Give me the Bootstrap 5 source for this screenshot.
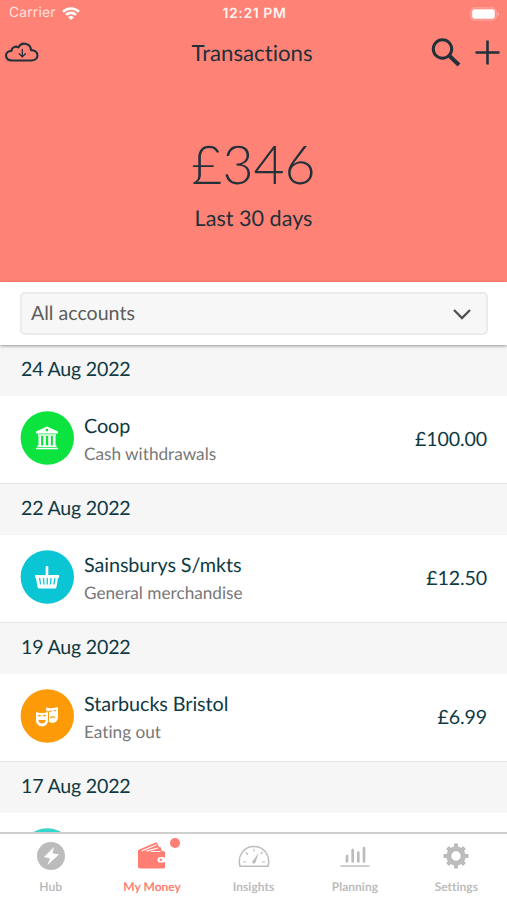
<!DOCTYPE html>
<html lang="en">
<head>
<meta charset="utf-8">
<meta name="viewport" content="width=device-width, initial-scale=1">
<title>Transactions</title>
<link href="https://cdn.jsdelivr.net/npm/bootstrap@5.3.0/dist/css/bootstrap.min.css" rel="stylesheet">
<style>
body{font-family:Lato,"Liberation Sans",sans-serif;color:#0f3a44;background:#fff;line-height:1.2;text-rendering:geometricPrecision;font-variant-ligatures:none}
.app{height:900px;overflow:hidden}
.hero{background:#ff8276;height:282px;color:#22303a}
.status{height:27px;font:400 13.8px/27px Inter,"Liberation Sans",sans-serif;color:#fff;padding:0 7px 0 9px}
.status .side{flex:1 1 0}
.status .carrier{color:#ffe3df;letter-spacing:.2px}
.clock{font-size:14px;font-weight:600;letter-spacing:.6px;color:#fff2f0}
.titlebar{height:50px;padding:2px 7px 0 4px}
.titlebar .side{flex:1 1 0}
.titlebar h1{font-size:22.200px;font-weight:400}
.plus{margin-left:14px}
.total{font-size:53.600px;font-weight:300;line-height:60px;margin-top:57px}
.period{font-size:21.600px;line-height:26px;margin-top:11px}
.filter{height:63px;padding:10px 19px 10px 20px;box-shadow:0 1px 3px rgba(0,0,0,.4);z-index:1}
.picker{height:43px;border:2px solid #ebebeb;border-radius:5px;background:#f7f7f7;color:#5c5c5c;font-size:19.6px;padding:0 15px 0 9px}
.day{height:51px;background:#f6f6f6;font-size:19.600px;letter-spacing:-.2px;padding:0 21px 1px}
.entry{height:88px;padding:0 20px 3px;border-bottom:1px solid #e6e6e6}
.disc{width:54px;height:54px;margin-right:10px}
.name{font-size:19.800px;line-height:24px;letter-spacing:-.08px;margin-top:2px}
.kind{font-size:17.200px;line-height:21px;color:#777;margin-top:5px}
.amount{font-size:19.600px;letter-spacing:-.1px;padding-top:3px}
.tabs{height:68px;border-top:2px solid #cfcfcf;color:#bcbcbc;font-size:12px;font-weight:700;background:#fff;z-index:2}
.tabs a{color:inherit;flex:1 1 0;padding-top:6px}
.tabs a.active{color:#ff7e73}
.tabs svg{width:38px;height:32px}
.dot{width:10px;height:10px;background:#ff7e73;top:4px;left:69px}
.lbl{line-height:16px;margin-top:7px}
</style>
</head>
<body>
<div class="app d-flex flex-column">
  <header class="hero flex-shrink-0">
    <div class="status d-flex align-items-center">
      <div class="side d-flex align-items-center carrier"><span>Carrier</span>
        <svg class="ms-1" width="22" height="16" viewBox="0 0 22 16" fill="none" stroke="#fff" stroke-width="2.6"><path d="M3 5.700a11.600 11.600 0 0 1 16 0M6 8.900a7.300 7.300 0 0 1 10 0"/><path d="M11 14.100 8.100 11.300a4.200 4.200 0 0 1 5.800 0z" fill="#fff" stroke="none"/></svg>
      </div>
      <div class="clock">12:21 PM</div>
      <div class="side d-flex justify-content-end">
        <svg width="30" height="14" viewBox="0 0 30 14"><rect x=".8" y=".8" width="25.400" height="12.400" rx="3.800" fill="none" stroke="#ffa79e" stroke-width="1.200"/><rect x="2.200" y="2.200" width="22.600" height="9.600" rx="2.400" fill="#fff"/><path d="M27.600 5v4q1.600-.6 1.600-2t-1.600-2z" fill="#ffb0a7"/></svg>
      </div>
    </div>
    <div class="titlebar d-flex align-items-center">
      <div class="side"><svg width="36" height="24" viewBox="0 0 36 24" fill="none" stroke="#22303a" stroke-width="2.100" stroke-linecap="round" stroke-linejoin="round"><path d="M8 19.500C4 19.500 2 17.400 2 14.600s2.200-4.700 5.400-4.700C7.700 6.400 11.600 4.600 14.400 6.400 16.200 3.100 19.500 2.100 22.300 2.900c3 .8 4.600 3 4.600 6.200 4 .1 6.600 2.400 6.600 5.200 0 3.100-2.400 5.200-6.200 5.200z"/><path d="M18.300 8.500V16M15.200 12.800l3.100 3.100 3.100-3.100" stroke-width="1.300"/></svg></div>
      <h1 class="mb-0">Transactions</h1>
      <div class="side d-flex justify-content-end align-items-center">
        <svg width="30" height="30" viewBox="0 0 30 30" fill="none" stroke="#22303a"><circle cx="11.500" cy="11" r="9.200" stroke-width="3"/><path d="m18 17.500 10 9.500" stroke-width="4"/></svg>
        <svg class="plus" width="25" height="26" viewBox="0 0 25 26" stroke="#22303a" stroke-width="2.600"><path d="M.5 12.500h24M12.500 .5v24"/></svg>
      </div>
    </div>
    <div class="total text-center">£346</div>
    <div class="period text-center">Last 30 days</div>
  </header>
  <section class="filter bg-white position-relative flex-shrink-0">
    <div class="picker d-flex justify-content-between align-items-center"><span>All accounts</span>
      <svg width="18" height="12" viewBox="0 0 18 12" fill="none" stroke="#505050" stroke-width="2.300"><path d="m1 2 8 8 8-8"/></svg>
    </div>
  </section>
  <main class="flex-grow-1 overflow-hidden">
    <div class="day d-flex align-items-center">24 Aug 2022</div>
    <div class="entry d-flex align-items-center">
      <svg class="disc" viewBox="0 0 54 54"><circle cx="27.300" cy="27" r="26.700" fill="#0de33f"/><g fill="#fff"><path fill-rule="evenodd" d="M27 15.500 38 20.500v2H16v-2zM27 17.700a1.400 1.400 0 1 0 0 2.800 1.400 1.400 0 0 0 0-2.800z"/><path d="M18 23.200h18v1.500H18zM18.500 25h2.600v9.500h-2.600zM23.200 25h2.600v9.500h-2.600zM28.200 25h2.600v9.500h-2.600zM32.900 25h2.600v9.500h-2.600zM17.500 34.500h19V36h-19zM16 36.700h22v1.600H16z"/></g></svg>
      <div class="flex-grow-1"><div class="name">Coop</div><div class="kind">Cash withdrawals</div></div>
      <div class="amount">£100.00</div>
    </div>
    <div class="day d-flex align-items-center">22 Aug 2022</div>
    <div class="entry d-flex align-items-center">
      <svg class="disc" viewBox="0 0 54 54"><circle cx="27.300" cy="27" r="26.700" fill="#0ac5d3"/><path fill="#fff" d="M25.700 16.500q1.300-.9 2.600 0V25H39v3h-1l-1.500 9q-.3 1.500-1.800 1.500H19.300q-1.500 0-1.800-1.500L16 28h-1v-3h10.700z"/><path d="m19.600 28 1 6.500M23.500 28l.5 6.500M27.200 28v6.500M31 28l-.5 6.500M34.900 28l-1 6.500" stroke="#0ac5d3" stroke-width="1.300"/></svg>
      <div class="flex-grow-1"><div class="name">Sainsburys S/mkts</div><div class="kind">General merchandise</div></div>
      <div class="amount">£12.50</div>
    </div>
    <div class="day d-flex align-items-center">19 Aug 2022</div>
    <div class="entry d-flex align-items-center">
      <svg class="disc" viewBox="0 0 54 54"><circle cx="27.300" cy="27" r="26.700" fill="#fc9b07"/><path fill="#fff" d="M26 18.500q6 1.500 12-.5V28q0 5.500-6 6-3-.3-5-3z"/><path d="M29 22.500q1.500-1 2.800 0M33.500 22q1.500-1 2.500 0M30.500 29q2.200-2.200 4.500-.5" fill="none" stroke="#fc9b07" stroke-width="1.200"/><path fill="#fff" stroke="#fc9b07" stroke-width="1" d="M15.500 22.500q6.500 2.300 13 0v8.500q0 6-6.500 7-6.500-1-6.500-7z"/><path d="M18 27q1.300-1.200 2.700 0M23.300 27q1.300-1.200 2.700 0" fill="none" stroke="#fc9b07" stroke-width="1.200"/><path d="M18.300 31h7.400q-.7 3.500-3.700 3.500T18.300 31z" fill="#fc9b07"/></svg>
      <div class="flex-grow-1"><div class="name">Starbucks Bristol</div><div class="kind">Eating out</div></div>
      <div class="amount">£6.99</div>
    </div>
    <div class="day d-flex align-items-center">17 Aug 2022</div>
    <div class="entry d-flex align-items-center">
      <svg class="disc" viewBox="0 0 54 54"><circle cx="27.300" cy="27" r="26.700" fill="#35d6cc"/></svg>
    </div>
  </main>
  <nav class="tabs d-flex flex-shrink-0 text-center">
    <a class="text-decoration-none" href="#"><svg viewBox="0 0 38 32"><circle cx="19" cy="16" r="14" fill="currentColor"/><path d="m22 7-10 10 6 1.500L15.500 25 27 14.500l-6.500-1.300z" fill="#fff"/></svg><div class="lbl">Hub</div></a>
    <a class="active position-relative text-decoration-none" href="#"><svg viewBox="0 0 38 32"><path fill="currentColor" d="M5 10 22.500 2.500q1.500-.5 2 1L26 7l2 .5.800 3.500h1.700q1.500 0 1.500 1.500V27q0 1.500-1.500 1.500H7q-2 0-2-2z"/><path d="m8.500 11 15-6.200M13.500 11.200l11.500-3.200M18 11.500h9.500" stroke="#fff" stroke-width="1.200"/><rect x="24.500" y="17" width="8" height="5.600" rx="2.800" fill="#fff"/><circle cx="27.800" cy="19.800" r="1.200" fill="currentColor"/></svg><span class="dot position-absolute rounded-circle"></span><div class="lbl">My Money</div></a>
    <a class="text-decoration-none" href="#"><svg viewBox="0 0 38 32" fill="none" stroke="currentColor" stroke-width="1.500"><path d="M5 26.200C2 15 9.500 6.500 19 6.500S36 15 33 26.200z" stroke-linejoin="round"/><path d="M19 9v2.500M11 12.500l2 2M27.500 12l-1.700 2M8 22h3M27 22h3" stroke-width="1.200"/><path d="m23.500 13-3 9.500q-1.500 2-3 .5-.5-1.500.5-2.500z" fill="currentColor" stroke="none"/></svg><div class="lbl">Insights</div></a>
    <a class="text-decoration-none" href="#"><svg viewBox="0 0 38 32" fill="none" stroke="currentColor"><path d="M4.500 26h29" stroke-width="1.500"/><path d="M11 21.500v-5.500M16.700 21.500V10M22.300 21.500v-9M28 21.500V8" stroke-width="2.700" stroke-linecap="round"/></svg><div class="lbl">Planning</div></a>
    <a class="text-decoration-none" href="#"><svg viewBox="0 0 38 32"><g fill="none" stroke="currentColor" transform="translate(19 16)"><circle r="7.200" stroke-width="5"/><path stroke-width="4" d="M0-12.500V-8M0 12.500V8M-12.500 0H-8M12.500 0H8M-8.500-8.500-6-6M8.500 8.500 6 6M-8.500 8.500-6 6M8.500-8.500 6-6"/></g></svg><div class="lbl">Settings</div></a>
  </nav>
</div>
<script src="https://cdn.jsdelivr.net/npm/bootstrap@5.3.0/dist/js/bootstrap.bundle.min.js"></script>
</body>
</html>
